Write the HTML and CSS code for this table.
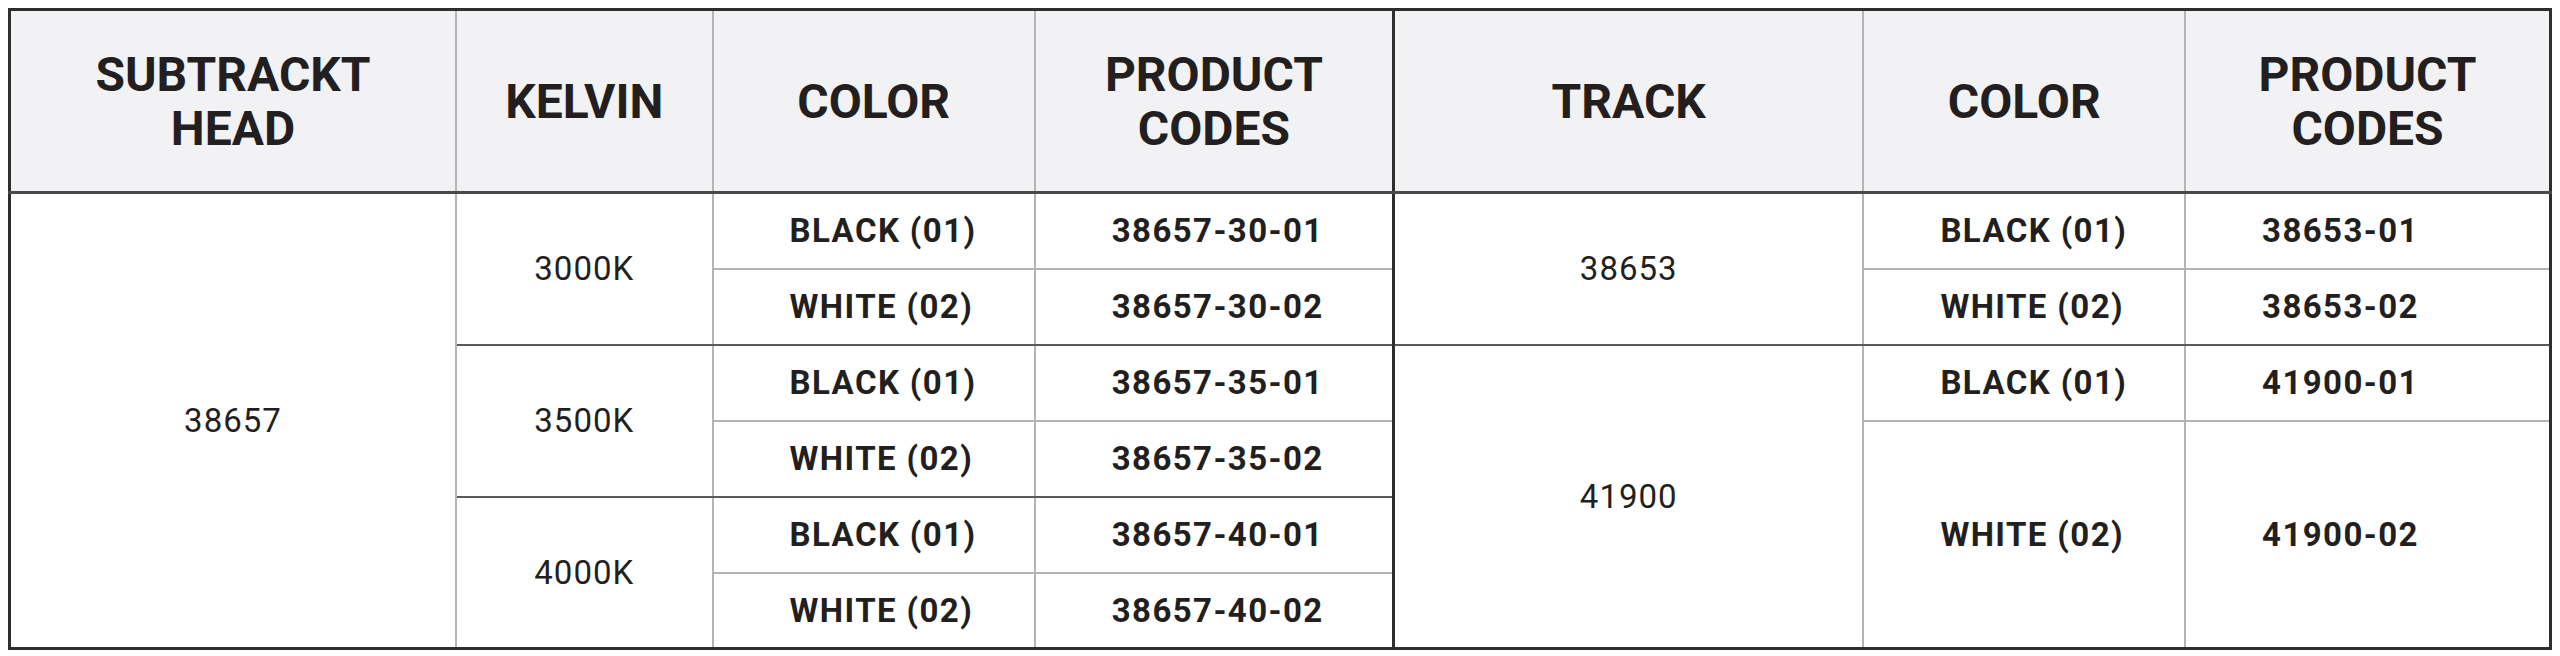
FILE: index.html
```html
<!DOCTYPE html>
<html lang="en">
<head>
<meta charset="utf-8">
<title>Product codes</title>
<link rel="stylesheet" href="styles.css">
</head>
<body>
<table class="spec">
  <colgroup>
    <col class="w1"><col class="w2"><col class="w3"><col class="w4"><col class="w5"><col class="w6"><col class="w7">
  </colgroup>
  <thead>
    <tr>
      <th>SUBTRACKT<br>HEAD</th>
      <th>KELVIN</th>
      <th>COLOR</th>
      <th class="split">PRODUCT<br>CODES</th>
      <th>TRACK</th>
      <th>COLOR</th>
      <th>PRODUCT<br>CODES</th>
    </tr>
  </thead>
  <tbody>
    <tr>
      <td rowspan="6" class="reg">38657</td>
      <td rowspan="2" class="reg grp">3000K</td>
      <td class="b">BLACK (01)</td>
      <td class="b split">38657-30-01</td>
      <td rowspan="2" class="reg grp">38653</td>
      <td class="b">BLACK (01)</td>
      <td class="b">38653-01</td>
    </tr>
    <tr>
      <td class="b grp">WHITE (02)</td>
      <td class="b split grp">38657-30-02</td>
      <td class="b grp">WHITE (02)</td>
      <td class="b grp">38653-02</td>
    </tr>
    <tr>
      <td rowspan="2" class="reg grp">3500K</td>
      <td class="b">BLACK (01)</td>
      <td class="b split">38657-35-01</td>
      <td rowspan="4" class="reg">41900</td>
      <td class="b">BLACK (01)</td>
      <td class="b">41900-01</td>
    </tr>
    <tr>
      <td class="b grp">WHITE (02)</td>
      <td class="b split grp">38657-35-02</td>
      <td rowspan="3" class="b">WHITE (02)</td>
      <td rowspan="3" class="b">41900-02</td>
    </tr>
    <tr>
      <td rowspan="2" class="reg">4000K</td>
      <td class="b">BLACK (01)</td>
      <td class="b split">38657-40-01</td>
    </tr>
    <tr>
      <td class="b">WHITE (02)</td>
      <td class="b split">38657-40-02</td>
    </tr>
  </tbody>
</table>
</body>
</html>
```
FILE: styles.css
```css
html, body {
  background: #ffffff;
}
body {
  margin: 8px;
  font-family: Roboto, "Liberation Sans", sans-serif;
  color: #231f20;
}
.spec {
  width: 100%;
  height: 640px;
  border-collapse: collapse;
  table-layout: fixed;
  border: 3px solid #2e2e2e;
}
.w1 { width: 17.57%; }
.w2 { width: 10.10%; }
.w3 { width: 12.68%; }
.w4 { width: 14.12%; }
.w5 { width: 18.49%; }
.w6 { width: 12.66%; }
.w7 { width: 14.38%; }

.spec th,
.spec td {
  border: 2px solid #b4b4b4;
  text-align: center;
  vertical-align: middle;
  padding: 0;
}
.spec th {
  background: #f2f2f4;
  height: 178px;
  padding-top: 2px;
  font-weight: 700;
  font-size: 48px;
  line-height: 54px;
  border-bottom: 3px solid #4a4a4a;
}
.spec tbody tr {
  height: 76px;
}
.spec .b {
  font-weight: 700;
  font-size: 33px;
  letter-spacing: 1.4px;
  text-align: left;
  padding-left: 76px;
}
.spec .reg {
  font-weight: 400;
  font-size: 33px;
  letter-spacing: 1px;
}
.spec .grp {
  border-bottom: 2px solid #5a5a5a;
}
.spec .split {
  border-right: 3px solid #2e2e2e;
}
```
